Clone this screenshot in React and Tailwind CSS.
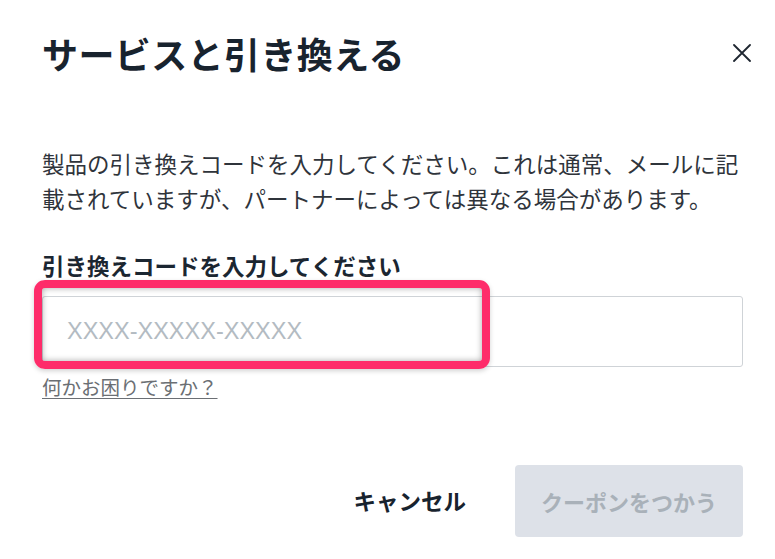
import React from "react";

export default function App() {
  const jp = { fontFamily: '"Noto Sans CJK JP", "Noto Sans", sans-serif' };
  return (
    <div
      className="w-[775px] h-[559px] bg-white overflow-hidden relative pl-[42px] pr-[32px]"
      style={jp}
    >
      {/* Header */}
      <div className="flex items-center justify-between pt-[26px] -mr-[8px]">
        <h1 className="text-[36px] leading-[54px] font-bold text-[#18232e] tracking-[0.4px]">
          サービスと引き換える
        </h1>
        <button className="w-[18px] h-[18px] flex items-center justify-center text-[#18232e]">
          <svg width="18" height="18" viewBox="0 0 18 18" fill="none">
            <path d="M1 1L17 17M17 1L1 17" stroke="#1e2630" strokeWidth="1.8" strokeLinecap="round" />
          </svg>
        </button>
      </div>

      {/* Description */}
      <p className="mt-[66px] text-[22.5px] leading-[35px] text-[#2f343b] whitespace-nowrap">
        製品の引き換えコードを入力してください。これは通常、メールに記
        <br />
        載されていますが、パートナーによっては異なる場合があります。
      </p>

      {/* Label */}
      <div className="mt-[34px] text-[22.5px] leading-[30px] font-bold text-[#1b2631]">
        引き換えコードを入力してください
      </div>

      {/* Input */}
      <div className="relative mt-[16px]">
        <input
          className="w-[701px] h-[71px] border border-[#cfd3d7] rounded-[3px] pl-[24px] text-[23.5px] text-[#333] placeholder:text-[#b3bbc2] outline-none bg-white"
          style={{ fontFamily: '"Liberation Sans", Arial, sans-serif' }}
          placeholder="XXXX-XXXXX-XXXXX"
          readOnly
        />
        <div className="absolute left-[-8px] top-[-16px] w-[456px] h-[89px] border-[8px] border-[#fe2c6a] rounded-[11px] shadow-[inset_0_0_6px_rgba(0,0,0,0.35),0_2px_5px_rgba(0,0,0,0.18)] pointer-events-none" />
      </div>

      {/* Help link */}
      <div className="mt-[7px]">
        <a className="text-[19.5px] leading-[26px] text-[#6b6f74] underline underline-offset-[3px] decoration-[1px]">
          何かお困りですか？
        </a>
      </div>

      {/* Footer */}
      <div className="mt-[65px] flex justify-end items-center gap-[24px]">
        <button className="h-[72px] px-[25px] text-[22.5px] font-bold text-[#18232e]">
          キャンセル
        </button>
        <button className="w-[228px] h-[72px] rounded-[4px] bg-[#dde1e8] text-[22px] font-bold text-[#a9b1b9]">
          クーポンをつかう
        </button>
      </div>
    </div>
  );
}
